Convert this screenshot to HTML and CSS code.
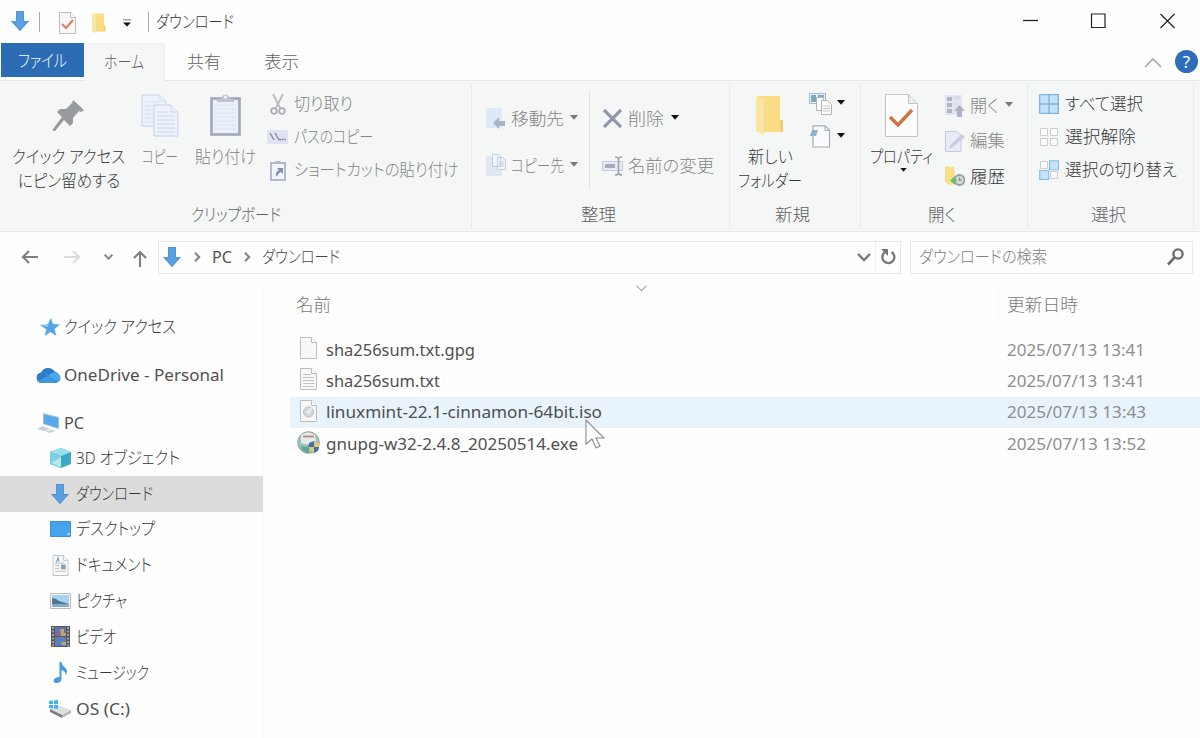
FILE: index.html
```html
<!DOCTYPE html>
<html lang="ja">
<head>
  <meta charset="UTF-8">
  <title>ダウンロード</title>
  <link rel="stylesheet" href="styles.css">
</head>
<body>
  <svg class="defs" width="0" height="0">
    <symbol id="down" viewBox="0 0 18 20"><path d="M5 0h8v10h5l-9 10-9-10h5z" fill="#58a0df"/><path d="M5.5.5h7v10H17l-8 9-8-9h4.500z" fill="none" stroke="#4b92d3" stroke-width=".8"/></symbol>
    <symbol id="caret" viewBox="0 0 8 5"><path d="M0 0h8L4 4.800z" fill="currentColor"/></symbol>
    <symbol id="doc" viewBox="0 0 17 22"><path d="M.5.500h11l5 5v16H.500z" fill="#f8f8f8" stroke="#bdbdbd"/><path d="M11.500.500v5h5" fill="#fff" stroke="#bdbdbd"/></symbol>
    <symbol id="folder" viewBox="0 0 28 40"><path d="M2 1h22v33h2v3H9z" fill="#f9dc83"/><path d="M24 25h3v12h-3z" fill="#f3cd6c"/><path d="M0 1l10 5v31l-3 3-7-4z" fill="#fae6a4"/><path d="M9 6v31" stroke="#edcc72" fill="none"/></symbol>
    <symbol id="chev" viewBox="0 0 8 12"><path d="M1 1l5 5-5 5" fill="none" stroke="#858585" stroke-width="2.500"/></symbol>
  </svg>

  <header class="titlebar">
    <svg class="tb-down" width="18" height="20"><use href="#down"/></svg>
    <i class="tb-sep"></i>
    <svg class="tb-doc" width="17" height="22" viewBox="0 0 17 22"><use href="#doc"/><path d="M3 12l4 4 7-8" fill="none" stroke="#e07a5c" stroke-width="2"/></svg>
    <svg class="tb-folder" width="14" height="20" viewBox="0 0 28 40"><use href="#folder"/></svg>
    <svg class="tb-more" width="8" height="8" viewBox="0 0 8 8"><path d="M0 .800h8" stroke="#777"/><path d="M0 3.500h8L4 7.500z" fill="#111"/></svg>
    <i class="tb-sep"></i>
    <span class="tb-title" data-w="78">ダウンロード</span>
    <div class="win-buttons">
      <svg class="min" width="16" height="16" viewBox="0 0 16 16"><path d="M0 8.500h15" stroke="#222" stroke-width="1.300"/></svg>
      <svg width="16" height="16" viewBox="0 0 16 16"><path d="M1.500 1h13.500v13.500H1.500z" fill="none" stroke="#222" stroke-width="1.200"/></svg>
      <svg width="16" height="16" viewBox="0 0 16 16"><path d="M1.500 1l14 14M15.500 1l-14 14" stroke="#222" stroke-width="1.200"/></svg>
    </div>
  </header>

  <nav class="tabs">
    <a class="tab file"><span data-w="49">ファイル</span></a>
    <a class="tab active"><span data-w="40">ホーム</span></a>
    <a class="tab share"><span data-w="34">共有</span></a>
    <a class="tab view"><span data-w="35">表示</span></a>
    <svg class="collapse" width="18" height="11" viewBox="0 0 18 11"><path d="M1 10l8-8 8 8" fill="none" stroke="#aaa" stroke-width="1.700"/></svg>
    <span class="help">?</span>
  </nav>

  <section class="ribbon">
    <div class="group clip">
      <div class="tools">
        <div class="big pin">
          <div class="pic"><svg width="31" height="31" viewBox="0 0 31 31"><path d="M20 0l11 10-3 2-2-1-6 7 0 5-3 3-6-6L2 31H0v-2L9 17l-5-5 3-3h6l6-6z" fill="#989b9e"/></svg></div>
          <span data-w="113">クイック アクセス</span>
          <span data-w="102">にピン留めする</span>
        </div>
        <div class="big copy off">
          <div class="pic"><svg width="38" height="43" viewBox="0 0 38 43"><g fill="#edf2fb" stroke="#c6d0e6"><path d="M1 1h18l6 6v25H1z"/><path d="M19 1v6h6M4 8h14M4 12h18M4 16h18M4 20h18M4 24h18M4 28h18" stroke="#d6dff0"/><path d="M13 11h17l7 7v24H13z"/><path d="M30 11v7h7M16 18h11M16 22h18M16 26h18M16 30h18M16 34h18M16 38h18" stroke="#ccd6eb"/></g></svg></div>
          <span data-w="36">コピー</span>
        </div>
        <div class="big paste off">
          <div class="pic"><svg width="31" height="44" viewBox="0 0 31 44"><rect x="1.500" y="5.500" width="28" height="36" fill="#eaf0fa" stroke="#a2a5bb" stroke-width="2.600"/><path d="M5 12h21M5 16h21M5 20h21M5 24h21M5 28h21M5 32h21M5 36h21" stroke="#dae2f0"/><path d="M7 9V7l5-2a3.500 3.500 0 0 1 7 0l5 2v2z" fill="#bec3cd"/><circle cx="15.500" cy="4" r="1.500" fill="#f5f6f7"/></svg></div>
          <span data-w="61">貼り付け</span>
        </div>
        <div class="list off">
          <div class="item"><b><svg width="16" height="22" viewBox="0 0 16 22"><path d="M3 1l7 14M13 1L6 15" stroke="#b7babf" stroke-width="1.800"/><circle cx="4" cy="18" r="2.800" fill="none" stroke="#a8abb1" stroke-width="1.800"/><circle cx="12" cy="18" r="2.800" fill="none" stroke="#a8abb1" stroke-width="1.800"/></svg></b><span data-w="59">切り取り</span></div>
          <div class="item"><b><svg width="21" height="14" viewBox="0 0 21 14"><path d="M0 0h21v14H0z" fill="#e0e3f1"/><path d="M3 3l4 7M8 3l4 7" stroke="#858ba8" stroke-width="1.400"/><path d="M12 9.500h7" stroke="#858ba8" stroke-width="1.500" stroke-dasharray="2 .6"/></svg></b><span data-w="79">パスのコピー</span></div>
          <div class="item"><b><svg width="16" height="22" viewBox="0 0 16 22"><path d="M1 4h14v17H1z" fill="#f1f5fc" stroke="#a0a7be" stroke-width="1.500"/><path d="M4 4l2-2h4l2 2z" fill="#b5bac8"/><path d="M7 9h6v6l-2-2q-3 1-4 5-3-4 2-7z" fill="#8490b0"/></svg></b><span data-w="164">ショートカットの貼り付け</span></div>
        </div>
      </div>
      <div class="caption"><span data-w="90">クリップボード</span></div>
    </div>

    <div class="group organize">
      <div class="tools">
        <div class="list wide move off">
          <div class="item"><b><svg width="20" height="21" viewBox="0 0 20 21"><path d="M0 0h16v20H0z" fill="#dfe8f7"/><path d="M7 15l6-6v4h6v5h-6v3z" fill="#a9b3c7"/></svg></b><span data-w="53">移動先</span><svg class="caret" width="8" height="5"><use href="#caret"/></svg></div>
          <div class="item"><b><svg width="20" height="23" viewBox="0 0 20 23"><path d="M0 2h16v20H0z" fill="#dfe6f4"/><path d="M6.500.500h6l2 2v10h-8zM11.500 3.500h5l3 3v9h-8z" fill="#f0f3fa" stroke="#c4cddf"/><path d="M13 8h5M13 10h5M13 12h5" stroke="#c4cddf"/></svg></b><span data-w="53">コピー先</span><svg class="caret" width="8" height="5"><use href="#caret"/></svg></div>
        </div>
        <i class="rule"></i>
        <div class="list wide del off">
          <div class="item"><b><svg width="19" height="19" viewBox="0 0 19 19"><path d="M1 1l17 17M18 1L1 18" stroke="#9195ad" stroke-width="3.200"/></svg></b><span data-w="36">削除</span><svg class="caret dark" width="8" height="5"><use href="#caret"/></svg></div>
          <div class="item"><b><svg width="22" height="20" viewBox="0 0 22 20"><path d="M.5 5.500h20v9H.500z" fill="#e6ebf7" stroke="#c3cadb"/><path d="M3 8h10v4H3z" fill="#a4aabd"/><path d="M13 1q3 0 3.500 2Q17 1 20 1M13 19q3 0 3.500-2 .5 2 3.500 2M16.500 3v14" fill="none" stroke="#9da1ab" stroke-width="1.500"/></svg></b><span data-w="86">名前の変更</span></div>
        </div>
      </div>
      <div class="caption"><span data-w="35">整理</span></div>
    </div>

    <div class="group new">
      <div class="tools">
        <div class="big mk">
          <div class="pic"><svg width="28" height="40"><use href="#folder"/></svg></div>
          <span data-w="45">新しい</span>
          <span data-w="64">フォルダー</span>
        </div>
        <div class="list mini">
          <div class="item"><b><svg width="23" height="23" viewBox="0 0 23 23"><path d="M.5 1.500h16v10H.500z" fill="#e5f0f5" stroke="#a9bbc6"/><path d="M2 3h5v7H2z" fill="#7fa9b8"/><path d="M9 3h6v2H9z" fill="#78a9dd"/><path d="M7.500 5.500h7v13h-7z" fill="#fff" stroke="#b5b5b5"/><path d="M12.500 8.500h6l4 4v10h-10z" fill="#fff" stroke="#b5b5b5"/><path d="M14 14h7M14 16.500h7M14 19h7" stroke="#c5c5c5"/></svg></b><svg class="caret dark" width="8" height="5"><use href="#caret"/></svg></div>
          <div class="item"><b><svg width="21" height="23" viewBox="0 0 21 23"><path d="M3 .800h12l4.500 4.500V22H3z" fill="#fbfcfd" stroke="#a4abb1" stroke-width="1.200"/><path d="M15 1v4.500h4.500" fill="none" stroke="#a4abb1"/><path d="M2 5h6l-2 6H0z" fill="#93b0d6"/></svg></b><svg class="caret dark" width="8" height="5"><use href="#caret"/></svg></div>
        </div>
      </div>
      <div class="caption"><span data-w="35">新規</span></div>
    </div>

    <div class="group open">
      <div class="tools">
        <div class="big prop">
          <div class="pic"><svg width="33" height="43" viewBox="0 0 33 43"><path d="M.5.500h23l9 9v33H.500z" fill="#fcfcfc" stroke="#c0c2c4"/><path d="M23.500.500v9h9" fill="#eee" stroke="#c0c2c4"/><path d="M5 23l8 8 14-15" fill="none" stroke="#cf7344" stroke-width="3.400"/></svg></div>
          <span data-w="63">プロパティ</span>
          <svg class="caret under" width="7" height="4"><use href="#caret"/></svg>
        </div>
        <div class="list tall">
          <div class="item off"><b><svg width="20" height="22" viewBox="0 0 20 22"><path d="M0 0h17v20H0z" fill="#e2e5f2"/><path d="M2 2h5v4H2zM2 8h5v4H2zM2 14h5v4H2z" fill="#adb4c8"/><path d="M9 2h6M9 4h6M9 9h4" stroke="#cbcfe0"/><path d="M14.500 10l5.500 6h-3v6h-5v-6H9z" fill="#adb1c3"/></svg></b><span data-w="29">開く</span><svg class="caret" width="8" height="5"><use href="#caret"/></svg></div>
          <div class="item off"><b><svg width="20" height="21" viewBox="0 0 20 21"><path d="M.5.500H12l4 4v16H.500z" fill="#e8ebf8" stroke="#c5cadd"/><path d="M4 18l2-5L17 3l3 3L8 16z" fill="#c8cde0"/></svg></b><span data-w="35">編集</span></div>
          <div class="item"><b><svg width="20" height="21" viewBox="0 0 20 21"><path d="M0 0l9 1 2 16-6 2-5-3z" fill="#f9df88"/><circle cx="14.500" cy="14" r="5" fill="#d3d8d5" stroke="#98a19d" stroke-width="1.800"/><path d="M14.500 11.500v3l2.500-1" fill="none" stroke="#888"/><path d="M5 14.500l5-4.500v3l3 1-3 2v3z" fill="#74bd70"/></svg></b><span data-w="35">履歴</span></div>
        </div>
      </div>
      <div class="caption"><span data-w="28">開く</span></div>
    </div>

    <div class="group select">
      <div class="tools">
        <div class="list">
          <div class="item"><b><svg width="20" height="20" viewBox="0 0 20 20"><path d="M.7.700h18.600v18.600H.700zM10 0v20M0 10h20" fill="#c4e2f9" stroke="#80b3da" stroke-width="1.300"/></svg></b><span data-w="78">すべて選択</span></div>
          <div class="item"><b><svg width="20" height="20" viewBox="0 0 20 20"><path d="M1.500 1.500h7v7h-7zM11.500 1.500h7v7h-7zM1.500 11.500h7v7h-7zM11.500 11.500h7v7h-7z" fill="#fafafa" stroke="#cbcdce"/></svg></b><span data-w="71">選択解除</span></div>
          <div class="item"><b><svg width="20" height="20" viewBox="0 0 20 20"><path d="M1.500 1.500h7v7h-7zM11.500 11.500h7v7h-7z" fill="#fafafa" stroke="#cbcdce"/><path d="M10.500.700h9v9h-9zM.7 10.500h9v9h-9z" fill="#c4e2f9" stroke="#8abadf" stroke-width="1.100"/></svg></b><span data-w="112">選択の切り替え</span></div>
        </div>
      </div>
      <div class="caption"><span data-w="35">選択</span></div>
    </div>
  </section>

  <div class="navbar">
    <svg class="back" width="17" height="14" viewBox="0 0 17 14"><path d="M17 7H2M8 1L2 7l6 6" fill="none" stroke="#808080" stroke-width="2.200"/></svg>
    <svg class="fwd" width="17" height="14" viewBox="0 0 17 14"><path d="M0 7h15M9 1l6 6-6 6" fill="none" stroke="#dcdcdc" stroke-width="2.200"/></svg>
    <svg class="recent" width="9" height="6" viewBox="0 0 9 6"><path d="M.7.700l3.800 4L8.300.700" fill="none" stroke="#8a8a8a" stroke-width="2.100"/></svg>
    <svg class="up" width="14" height="17" viewBox="0 0 14 17"><path d="M7 17V2M1 8l6-6 6 6" fill="none" stroke="#808080" stroke-width="2.200"/></svg>
    <div class="address">
      <svg width="18" height="20"><use href="#down"/></svg>
      <svg class="arrow1" width="7" height="10"><use href="#chev"/></svg>
      <span class="latin" data-w="20">PC</span>
      <svg class="arrow2" width="7" height="10"><use href="#chev"/></svg>
      <span data-w="78">ダウンロード</span>
      <svg class="drop" width="14" height="9" viewBox="0 0 14 9"><path d="M1 1l6 6 6-6" fill="none" stroke="#777" stroke-width="2.300"/></svg>
      <div class="refresh"><svg width="16" height="17" viewBox="0 0 16 17"><path d="M4.500 4.500A6 6 0 1 0 11.500 4" fill="none" stroke="#777" stroke-width="2.300"/><path d="M1 1h7v7z" fill="#777"/></svg></div>
    </div>
    <div class="search">
      <span data-w="128">ダウンロードの検索</span>
      <svg width="17" height="18" viewBox="0 0 17 18"><circle cx="11" cy="6" r="4.600" fill="none" stroke="#6c6c6c" stroke-width="2.400"/><path d="M7.500 9.500L1 16.500" stroke="#6c6c6c" stroke-width="2.600"/></svg>
    </div>
  </div>

  <main class="body">
    <aside class="side">
      <div class="node root quick"><b><svg width="20" height="18" viewBox="0 0 20 18"><path d="M11 0l2 6 7 .5-5.500 4.500 2 7-6-4-6 4 2-6.500L0 7l7.500-.500z" fill="#51a6e3"/><path d="M11 0L7.500 6.500 0 7l7.500 2z" fill="#8acbf0"/></svg></b><span data-w="112">クイック アクセス</span></div>
      <div class="node root"><b><svg width="25" height="17" viewBox="0 0 25 17"><path d="M5.500 16a5.300 5.300 0 0 1-.5-10.500A8 8 0 0 1 19 5a5.700 5.700 0 0 1 1 11z" fill="#2c7ccb"/><path d="M8 5l12 8-1 3H5.500q-3 0-4-2l10-5z" fill="#3c97dd"/><path d="M13 9q2-4 7-3 5 1 4.500 6-.5 2-2 3z" fill="#4ba6ea"/></svg></b><span class="latin" data-w="160">OneDrive - Personal</span></div>
      <div class="node root pc"><b><svg width="22" height="20" viewBox="0 0 22 20"><path d="M6 0l16 4v12L6 11z" fill="#9bc2df"/><path d="M7 1.500l14 3.500v10L7 10.500z" fill="#5aa8ea"/><path d="M5 13l8 3-6 2-7-2zM8 18l7-1 4 1-7 2z" fill="#cbd0d5"/></svg></b><span class="latin" data-w="20">PC</span></div>
      <div class="node"><b><svg width="21" height="20" viewBox="0 0 21 20"><path d="M0 4l11-4 10 4v12l-10 4L0 16z" fill="#3ba9c6"/><path d="M0 4l11-4 10 4-10 4z" fill="#9ae1eb"/><path d="M0 4l11 4v12L0 16z" fill="#7ed0de"/><path d="M1 15l10-6v10z" fill="#b4e7ee"/></svg></b><span data-w="104">3D オブジェクト</span></div>
      <div class="node selected"><b><svg width="18" height="20"><use href="#down"/></svg></b><span data-w="77">ダウンロード</span></div>
      <div class="node"><b><svg width="21" height="16" viewBox="0 0 21 16"><path d="M.5.500h20v15H.500z" fill="#45a5ec" stroke="#3b90cf"/><path d="M17 13h3" stroke="#bfe5fc" stroke-width="1.500"/></svg></b><span data-w="79">デスクトップ</span></div>
      <div class="node"><b><svg width="17" height="21" viewBox="0 0 17 22"><use href="#doc"/><path d="M4 8l2-5 1 4" fill="none" stroke="#77a5d2" stroke-width="1.300"/><path d="M9 10h5v5H9z" fill="#8aa1b2"/><path d="M3 11h4M3 14h4M3 17h11M3 8.500h10" stroke="#bbb"/></svg></b><span data-w="76">ドキュメント</span></div>
      <div class="node"><b><svg width="21" height="16" viewBox="0 0 21 16"><path d="M.5.500h20v15H.500z" fill="#f8f8f8" stroke="#bbb"/><path d="M2 2h17v12H2z" fill="#a9d2ef"/><path d="M2 5q4 0 7 3l10 3v1H2z" fill="#4d788f"/><path d="M2 11h17v3H2z" fill="#86abc6"/></svg></b><span data-w="51">ピクチャ</span></div>
      <div class="node"><b><svg width="19" height="21" viewBox="0 0 19 21"><path d="M0 0h19v21H0z" fill="#55555a"/><path d="M4 1h11v9H4z" fill="#6272ac"/><path d="M4 11h11v9H4z" fill="#5980bc"/><path d="M9 3h4v4h2v3h-5zM10 16h5v3h-4z" fill="#bda765"/><path d="M5 7h4v3H5z" fill="#9c5f82"/><path d="M2 1v20M17 1v20" stroke="#bbb" stroke-width="1.500" stroke-dasharray="2 1.500"/></svg></b><span data-w="40">ビデオ</span></div>
      <div class="node"><b><svg width="15" height="21" viewBox="0 0 15 21"><path d="M6.500 0h2q0 3 3 5 4 3 1.500 8-.5-4-4.500-5v9q0 3-4 4-4 .500-4-2.500 1-3.500 6-3.500z" fill="#479bdc"/></svg></b><span data-w="73">ミュージック</span></div>
      <div class="node drive"><b><svg width="22" height="18" viewBox="0 0 22 18"><path d="M1 9l10-3 11 4-9 5z" fill="#dedfe0"/><path d="M1 9l12 6v3L1 12z" fill="#777c80"/><path d="M13 15l9-5v3l-9 5z" fill="#b5b8ba"/><path d="M0 1l4-.5V4H0zM5 .400L9 0v4H5zM0 5h4v3.500L0 8zM5 5h4v4l-4-.500z" fill="#40b7e8"/></svg></b><span class="latin" data-w="54">OS (C:)</span></div>
    </aside>

    <section class="files">
      <div class="head"><span data-w="35">名前</span><svg width="11" height="7" viewBox="0 0 11 7"><path d="M.5.700l5 5 5-5" fill="none" stroke="#aaa" stroke-width="1.200"/></svg><div class="date"><span data-w="71">更新日時</span></div></div>
      <div class="row"><b><svg width="17" height="22"><use href="#doc"/></svg></b><span data-w="149">sha256sum.txt.gpg</span><time><span data-w="138">2025/07/13 13:41</span></time></div>
      <div class="row"><b><svg width="17" height="22" viewBox="0 0 17 22"><use href="#doc"/><path d="M3 6.500h8M3 9.500h11M3 12.500h11M3 15.500h11M3 18.500h11" stroke="#c2c2c2"/></svg></b><span data-w="114">sha256sum.txt</span><time><span data-w="138">2025/07/13 13:41</span></time></div>
      <div class="row hover"><b><svg width="17" height="22" viewBox="0 0 17 22"><use href="#doc"/><circle cx="8.500" cy="12" r="5" fill="#d4d8da" stroke="#b8bdc0"/><path d="M8.500 12l3-4" stroke="#eee" stroke-width="2"/><circle cx="8.500" cy="12" r="1.500" fill="#f3f3f3"/></svg></b><span data-w="276">linuxmint-22.1-cinnamon-64bit.iso</span><time><span data-w="139">2025/07/13 13:43</span></time></div>
      <div class="row"><b><svg width="23" height="23" viewBox="0 0 23 23"><circle cx="11.500" cy="11.500" r="10.800" fill="#a3c2bc" stroke="#8da3a1"/><path d="M4 4q7-5 14 0l1 7q-7 4-15 1z" fill="#e4ebe9"/><path d="M6 5.500h11" stroke="#bd8580" stroke-width="1.800"/><path d="M3 14q6 4 9 0v8q-6 0-9-8z" fill="#62a592"/><path d="M12 12l5-2 5 2v5q-1 4-5 5-4-1-5-5z" fill="#3f70ad"/><path d="M17 10l5 2v4h-5zM12 16h5v6q-4-1-5-5z" fill="#e2c972"/></svg></b><span data-w="252">gnupg-w32-2.4.8_20250514.exe</span><time><span data-w="139">2025/07/13 13:52</span></time></div>
    </section>
  </main>

  <svg class="cursor" width="20" height="31" viewBox="0 0 20 31"><path d="M1 1v24l6-5 4 9 4-2-4-8h8z" fill="#fff" stroke="#8a8a8a" stroke-width="1.100"/></svg>
  <script src="script.js"></script>
</body>
</html>
```

FILE: styles.css
```css
* {
  box-sizing: border-box;
}

body {
  margin: 0;
  width: 1200px;
  height: 738px;
  overflow: hidden;
  background: #fefefe;
  color: #383838;
  font-family: "Noto Sans", "Noto Sans CJK JP", sans-serif;
  font-size: 17px;
  font-weight: 300;
  line-height: 24px;
  font-feature-settings: "palt";
}

svg {
  display: block;
  flex: none;
}

b {
  display: flex;
  flex: none;
  align-items: center;
  justify-content: center;
}

[data-w] {
  display: inline-block;
  flex: none;
  white-space: nowrap;
  transform-origin: 0 50%;
}

.latin {
  font-weight: 400;
  color: #505050;
}

.defs {
  position: absolute;
}

/* title bar */
.titlebar {
  display: flex;
  align-items: center;
  height: 43px;
  padding-left: 11px;
}

.tb-sep {
  width: 1px;
  height: 20px;
  background: #aaa;
}

.tb-down { margin: -2px 10px 0 0; }
.tb-doc { margin: 2px 17px 0 19px; }
.tb-folder { margin: 2px 17px 0 -1px; }
.tb-more { margin: 2px 17px 0 0; }
.tb-title { margin-left: 7px; }

.win-buttons {
  display: flex;
  gap: 53px;
  margin: -2px 25px 0 auto;
}

.win-buttons .min {
  margin: -1px -2px 0 2px;
}

/* tabs */
.tabs {
  display: flex;
  align-items: flex-start;
  height: 37px;
  color: #606060;
}

.tab {
  display: flex;
  justify-content: center;
  height: 38px;
  padding-top: 7px;
}

.tab.file {
  width: 83px;
  height: 34px;
  margin-left: 1px;
  padding-top: 6px;
  background: #2b6cb5;
  color: #fff;
}

.tab.active {
  width: 80px;
  margin-left: 1px;
  border: 1px solid #eff0f0;
  border-bottom: 0;
  background: #f5f7f7;
  padding: 6px 2px 0 0;
  z-index: 1;
}

.tab.share { margin-left: 22px; }
.tab.view { margin-left: 43px; }
.collapse { margin: 14px 13px 0 auto; }

.help {
  width: 23px;
  height: 23px;
  margin: 7px 2px 0 0;
  border-radius: 50%;
  background: #2e6dba;
  color: #fff;
  font-size: 17px;
  line-height: 23px;
  text-align: center;
  font-weight: 400;
}

/* ribbon */
.ribbon {
  display: flex;
  height: 152px;
  background: #f5f7f7;
  border-top: 1px solid #e6e8e8;
  border-bottom: 1px solid #e6e8e8;
}

.group {
  height: 144px;
  margin-top: 4px;
  border-right: 1px solid #eaecec;
}

.clip { width: 472px; }
.organize { width: 258px; }
.new { width: 131px; }
.open { width: 167px; }
.select { width: 166px; }

.tools {
  display: flex;
  height: 118px;
}

.caption {
  display: flex;
  justify-content: center;
  padding-right: 5px;
  color: #606060;
}

.clip .caption { padding: 0 0 0 1px; }

.off {
  color: #848484;
}

.big {
  display: flex;
  flex-direction: column;
  flex: none;
  align-items: center;
  padding-top: 5px;
}

.pic {
  display: flex;
  align-items: center;
  height: 50px;
  margin-bottom: 5px;
}

.pin { width: 137px; }
.pin .pic { margin-top: -1px; margin-bottom: 6px; padding-top: 2px; }
.copy { width: 46px; }
.paste { width: 85px; }
.mk { width: 80px; }
.prop { width: 81px; }

.list {
  padding-top: 2px;
}

.item {
  display: flex;
  align-items: center;
  height: 33px;
}

.item b {
  width: 21px;
  margin-right: 5px;
}

.clip .list { margin-left: -1px; }
.clip .item b { margin-right: 6px; }

.caret {
  margin: -3px 0 0 6px;
  color: #777;
}

.caret.dark { margin-left: 7px; color: #111; }
.caret.under { margin: -1px 0 0 4px; color: #111; }

.wide { padding-top: 10px; }
.wide .item { height: 47px; }
.move { width: 117px; padding-left: 13px; }
.move .item b { margin-right: 5px; }
.rule { width: 1px; height: 100px; margin-top: 5px; background: #e0e2e2; }
.del { padding-left: 12px; }
.mini { padding-top: 2px; }
.mini .item b { margin-right: 0; }
.mini .caret { margin-left: 6px; }
.tall { padding: 3px 0 0 2px; }
.tall .item { height: 35.500px; }
.tall .item b { margin-right: 5px; }
.select .list { padding-left: 10px; }
.select .item b { margin-right: 6px; }

/* navigation bar */
.navbar {
  display: flex;
  align-items: center;
  height: 52px;
  padding: 0 7px 2px 21px;
  color: #484848;
}

.fwd { margin-left: 26px; }
.recent { margin-left: 23px; }
.up { margin: 2px 11px 0 20px; }

.address {
  display: flex;
  align-items: center;
  width: 744px;
  height: 33px;
  border: 1px solid #e9e9e9;
  padding: 0 0 1px 5px;
}

.address > svg:first-child { margin-left: -1px; }
.arrow1 { margin: 1px 11px 0 13px; }
.arrow2 { margin: 1px 11px 0 12px; }
.drop { margin: 1px 4px 0 auto; }

.refresh {
  display: flex;
  align-items: center;
  justify-content: center;
  width: 25px;
  height: 31px;
  border-left: 1px solid #efefef;
}

.search {
  display: flex;
  align-items: center;
  justify-content: space-between;
  width: 284px;
  height: 33px;
  margin-left: 9px;
  padding: 0 8px;
  border: 1px solid #e9e9e9;
  color: #808080;
}

/* body */
.body {
  display: flex;
  height: 454px;
}

.side {
  width: 264px;
  padding-top: 18px;
  border-right: 1px solid #f9f9f9;
}

.node {
  display: flex;
  align-items: center;
  height: 35.800px;
  padding-left: 49px;
}

.node b {
  width: 22px;
  margin-right: 5px;
}

.node.root { height: 48px; padding-left: 35px; }
.node.root b { width: 26px; margin-right: 3px; }
.node.quick { height: 49px; padding-top: 1px; }
.node.quick b { padding-left: 4px; }
.node.pc { height: 36px; margin-top: 5px; padding-top: 1px; }
.node.drive { padding-top: 2px; }
.node.selected { background: #dcdcdc; }

.files {
  flex: 1;
  padding-left: 26px;
}

.head {
  display: flex;
  height: 50px;
  padding: 9px 0 0 6px;
  color: #787878;
}

.head svg { margin: -8px 0 0 305px; }

.date {
  width: 202px;
  height: 32px;
  margin: -2px 0 0 auto;
  padding: 2px 0 0 8px;
  border-left: 1px solid #f7f7f7;
}

.row {
  display: flex;
  align-items: center;
  height: 31.300px;
  font-weight: 400;
  color: #505050;
}

.row b {
  width: 23px;
  margin: -3px 6px 0 7px;
}

.row.hover { background: #e9f3fc; }

.row time {
  width: 193px;
  margin-left: auto;
  color: #8e8e8e;
}

.cursor {
  position: absolute;
  left: 585px;
  top: 419px;
}
```

FILE: script.js
```js
// condense each label to its own width, as the narrow UI font does
document.querySelectorAll('[data-w]').forEach(el => {
  const natural = el.getBoundingClientRect().width;
  const w = Number(el.dataset.w);
  el.style.transform = `scaleX(${w / natural})`;
  el.style.marginRight = `${w - natural}px`;
});
```
